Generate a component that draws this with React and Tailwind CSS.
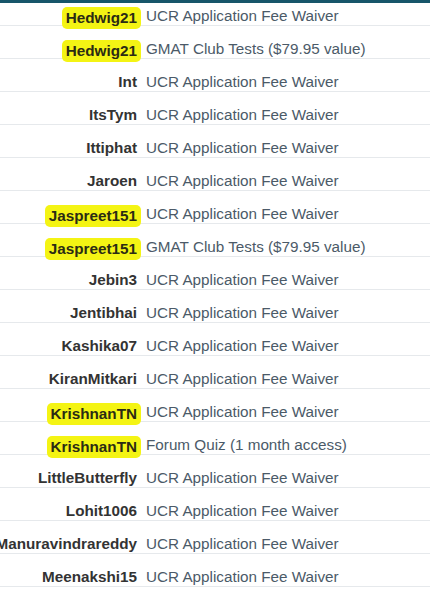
import React from 'react';

const rows = [
    { name: 'Hedwig21', prize: 'UCR Application Fee Waiver', mark: true },
    { name: 'Hedwig21', prize: 'GMAT Club Tests ($79.95 value)', mark: true },
    { name: 'Int', prize: 'UCR Application Fee Waiver' },
    { name: 'ItsTym', prize: 'UCR Application Fee Waiver' },
    { name: 'Ittiphat', prize: 'UCR Application Fee Waiver' },
    { name: 'Jaroen', prize: 'UCR Application Fee Waiver' },
    { name: 'Jaspreet151', prize: 'UCR Application Fee Waiver', mark: true },
    { name: 'Jaspreet151', prize: 'GMAT Club Tests ($79.95 value)', mark: true },
    { name: 'Jebin3', prize: 'UCR Application Fee Waiver' },
    { name: 'Jentibhai', prize: 'UCR Application Fee Waiver' },
    { name: 'Kashika07', prize: 'UCR Application Fee Waiver' },
    { name: 'KiranMitkari', prize: 'UCR Application Fee Waiver' },
    { name: 'KrishnanTN', prize: 'UCR Application Fee Waiver', mark: true },
    { name: 'KrishnanTN', prize: 'Forum Quiz (1 month access)', mark: true },
    { name: 'LittleButterfly', prize: 'UCR Application Fee Waiver' },
    { name: 'Lohit1006', prize: 'UCR Application Fee Waiver' },
    { name: 'Manuravindrareddy', prize: 'UCR Application Fee Waiver' },
    { name: 'Meenakshi15', prize: 'UCR Application Fee Waiver' },
];

export default function App() {
    return (
        <div className="w-[430px] h-[589px] overflow-hidden bg-white border-t-[3px] border-[#17566a] font-['Liberation_Sans',Arial,sans-serif] text-[15.25px] leading-[18px]">
            <div className="-mt-[10px]">
                {rows.map((row, i) => (
                    <div key={i} className="grid grid-cols-[137px_1fr] gap-[9px] h-[33px] pt-[14px] border-b border-[#e6e9ec]">
                        <div className="flex justify-end whitespace-nowrap">
                            <span className={`font-bold ${row.mark ? 'bg-[#f4f414] text-[#2b2b14] -mx-[4px] px-[4px] py-[2px] rounded-[5px]' : 'text-[#333333]'}`}>
                                {row.name}
                            </span>
                        </div>
                        <div className="whitespace-nowrap text-[#4b5a68]">{row.prize}</div>
                    </div>
                ))}
            </div>
        </div>
    );
}
